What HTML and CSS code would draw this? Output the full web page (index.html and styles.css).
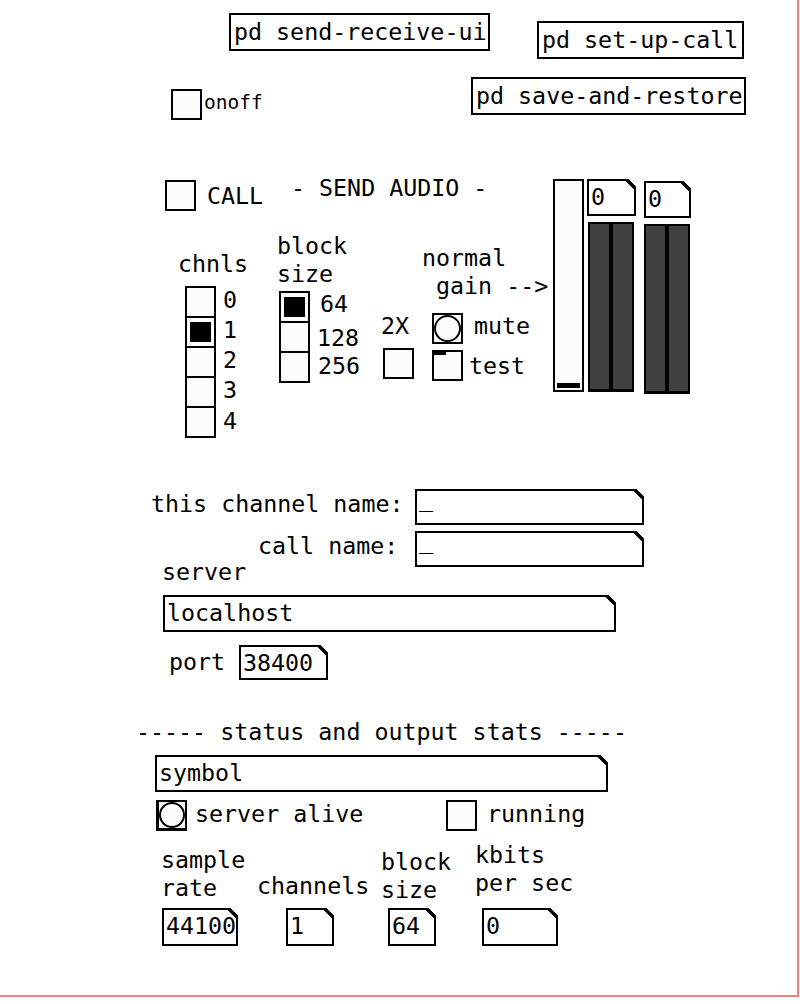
FILE: index.html
```html
<!DOCTYPE html>
<html lang="en">
<head>
    <meta charset="UTF-8">
    <title>send audio</title>
    <link rel="stylesheet" href="styles.css">
</head>
<body>

    <div class="patch">
        <div class="gop"></div>

        <div class="obj o-sendrecv">pd send-receive-ui</div>
        <div class="obj o-setup">pd set-up-call</div>
        <div class="obj o-save">pd save-and-restore</div>

        <div class="tgl t-onoff"></div>
        <div class="lbl-small l-onoff">onoff</div>

        <div class="tgl t-call"></div>
        <div class="cmt c-call">CALL</div>
        <div class="cmt c-title">- SEND AUDIO -</div>

        <!-- channel count radio -->
        <div class="cmt c-chnls">chnls</div>
        <div class="vradio r-chnls">
            <div class="cell"></div>
            <div class="cell on"></div>
            <div class="cell"></div>
            <div class="cell"></div>
            <div class="cell"></div>
        </div>
        <div class="cmt c-n0">0</div>
        <div class="cmt c-n1">1</div>
        <div class="cmt c-n2">2</div>
        <div class="cmt c-n3">3</div>
        <div class="cmt c-n4">4</div>

        <!-- block size radio -->
        <div class="cmt c-block">block
size</div>
        <div class="vradio r-block">
            <div class="cell on"></div>
            <div class="cell"></div>
            <div class="cell"></div>
        </div>
        <div class="cmt c-b64">64</div>
        <div class="cmt c-b128">128</div>
        <div class="cmt c-b256">256</div>

        <div class="cmt c-2x">2X</div>
        <div class="tgl t-2x"></div>

        <div class="cmt c-gain">normal
 gain --&gt;</div>
        <div class="bng b-mute"><span></span></div>
        <div class="cmt c-mute">mute</div>
        <div class="tgl t-test"><span class="mark"></span></div>
        <div class="cmt c-test">test</div>

        <!-- gain slider and meters -->
        <div class="vsl"><span class="knob"></span></div>
        <div class="atom a-lvl1">0</div>
        <div class="atom a-lvl2">0</div>
        <div class="vu vu-1"></div>
        <div class="vu vu-2"></div>
        <div class="vu vu-3"></div>
        <div class="vu vu-4"></div>

        <!-- names and server -->
        <div class="cmt c-chname">this channel name:</div>
        <div class="atom a-chname"><span class="empty">_</span></div>
        <div class="cmt c-callname">call name:</div>
        <div class="atom a-callname"><span class="empty">_</span></div>
        <div class="cmt c-server">server</div>
        <div class="atom a-host">localhost</div>
        <div class="cmt c-port">port</div>
        <div class="atom a-port">38400</div>

        <!-- status -->
        <div class="cmt c-status">----- status and output stats -----</div>
        <div class="atom a-symbol">symbol</div>
        <div class="bng b-alive"><span></span></div>
        <div class="cmt c-alive">server alive</div>
        <div class="tgl t-running"></div>
        <div class="cmt c-running">running</div>

        <div class="cmt c-sr">sample
rate</div>
        <div class="cmt c-ch">channels</div>
        <div class="cmt c-bs">block
size</div>
        <div class="cmt c-kb">kbits
per sec</div>

        <div class="atom a-sr">44100</div>
        <div class="atom a-ch">1</div>
        <div class="atom a-bs">64</div>
        <div class="atom a-kb">0</div>
    </div>

</body>
</html>
```

FILE: styles.css
```css
/* pd patch canvas, everything sits at its patch coordinates */
body {
    margin: 0;
    background: #fff;
    color: #000;
    font-family: "DejaVu Sans Mono", "Liberation Mono", monospace;
    font-size: 23.3px;
}
.patch {
    position: relative;
    width: 800px;
    height: 1004px;
    overflow: hidden;
}
.gop {
    position: absolute;
    left: -4px;
    top: -4px;
    width: 803px;
    height: 1001px;
    box-sizing: border-box;
    border-right: 2px solid #ef7f7f;
    border-bottom: 2px solid #ef7f7f;
}

/* comments */
.cmt {
    position: absolute;
    line-height: 28px;
    white-space: pre;
}
.lbl-small {
    position: absolute;
    font-size: 19.5px;
    line-height: 24px;
}

/* object boxes */
.obj {
    position: absolute;
    box-sizing: border-box;
    height: 38px;
    border: 2px solid #000;
    padding-left: 3px;
    line-height: 33px;
    white-space: pre;
    background: #fff;
}
.o-sendrecv { left: 229px; top: 13px; width: 261px; }
.o-setup { left: 537px; top: 21px; width: 207px; }
.o-save { left: 471px; top: 77px; width: 275px; }

/* number / symbol atoms with the cut corner */
.atom {
    position: absolute;
    box-sizing: border-box;
    border: 2px solid #000;
    background: #fff;
    padding-left: 2px;
    line-height: 31px;
    white-space: pre;
}
.atom::after {
    content: "";
    position: absolute;
    top: -2px;
    right: -2px;
    width: 10px;
    height: 10px;
    background: linear-gradient(to bottom left, #fff 0 calc(50% - 1.5px), #000 calc(50% - 1.5px) calc(50% + 1.5px), transparent calc(50% + 1.5px));
}
.atom .empty {
    line-height: 0;
    vertical-align: 9px;
}
.a-lvl1 { left: 587px; top: 179px; width: 49px; height: 37px; }
.a-lvl2 { left: 644px; top: 181px; width: 47px; height: 37px; }
.a-chname { left: 415px; top: 489px; width: 229px; height: 36px; }
.a-callname { left: 415px; top: 531px; width: 229px; height: 36px; }
.a-host { left: 163px; top: 595px; width: 453px; height: 37px; }
.a-port { left: 239px; top: 645px; width: 89px; height: 35px; }
.a-symbol { left: 155px; top: 755px; width: 453px; height: 37px; }
.a-sr { left: 162px; top: 908px; width: 76px; height: 38px; }
.a-ch { left: 286px; top: 908px; width: 48px; height: 38px; }
.a-bs { left: 388px; top: 908px; width: 48px; height: 38px; }
.a-kb { left: 482px; top: 908px; width: 76px; height: 38px; }

/* toggles and bangs */
.tgl, .bng {
    position: absolute;
    box-sizing: border-box;
    width: 31px;
    height: 31px;
    border: 2px solid #000;
    background: #fcfcfc;
}
.bng span {
    display: block;
    box-sizing: border-box;
    width: 100%;
    height: 100%;
    border: 2px solid #000;
    border-radius: 50%;
}
.t-onoff { left: 171px; top: 89px; }
.t-call { left: 165px; top: 180px; }
.t-2x { left: 383px; top: 348px; }
.t-test { left: 432px; top: 350px; }
.t-running { left: 446px; top: 800px; }
.b-mute { left: 432px; top: 313px; }
.b-alive {
    left: 156px;
    top: 800px;
    border-left-width: 3px;
    border-bottom-width: 3px;
}
.t-test .mark {
    position: absolute;
    left: 0;
    top: 0;
    width: 12px;
    height: 3px;
    background: #000;
}

/* radio groups */
.vradio {
    position: absolute;
    display: flex;
    flex-direction: column;
    width: 31px;
}
.vradio .cell {
    position: relative;
    box-sizing: border-box;
    height: 32px;
    border: 2px solid #000;
    background: #fcfcfc;
}
.vradio .cell + .cell {
    margin-top: -2px;
}
.vradio .cell.on::after {
    content: "";
    position: absolute;
    left: 3px;
    top: 4px;
    width: 21px;
    height: 20px;
    background: #000;
}
.r-chnls { left: 185px; top: 286px; }
.r-block { left: 279px; top: 291px; }

/* gain slider */
.vsl {
    position: absolute;
    left: 553px;
    top: 179px;
    box-sizing: border-box;
    width: 31px;
    height: 213px;
    border: 2px solid #000;
    background: #fcfcfc;
}
.vsl .knob {
    position: absolute;
    left: 2px;
    right: 2px;
    bottom: 2px;
    height: 5px;
    background: #000;
}

/* level meters */
.vu {
    position: absolute;
    box-sizing: border-box;
    width: 23px;
    height: 170px;
    border: 2px solid #000;
    border-bottom-width: 3px;
    background: #404040;
}
.vu-1 { left: 588px; top: 222px; }
.vu-2 { left: 611px; top: 222px; }
.vu-3 { left: 644px; top: 224px; }
.vu-4 { left: 667px; top: 224px; }

/* comment positions */
.l-onoff { left: 204px; top: 91px; }
.c-call { left: 207px; top: 182px; }
.c-title { left: 291px; top: 174px; }
.c-chnls { left: 178px; top: 250px; }
.c-n0 { left: 223px; top: 286px; }
.c-n1 { left: 223px; top: 316px; }
.c-n2 { left: 223px; top: 346px; }
.c-n3 { left: 223px; top: 376px; }
.c-n4 { left: 223px; top: 407px; }
.c-block { left: 277px; top: 232px; }
.c-b64 { left: 320px; top: 290px; }
.c-b128 { left: 317px; top: 324px; }
.c-b256 { left: 318px; top: 352px; }
.c-2x { left: 381px; top: 312px; }
.c-gain { left: 422px; top: 244px; }
.c-mute { left: 474px; top: 312px; }
.c-test { left: 469px; top: 352px; }
.c-chname { left: 151px; top: 490px; }
.c-callname { left: 258px; top: 532px; }
.c-server { left: 162px; top: 558px; }
.c-port { left: 169px; top: 648px; }
.c-status { left: 136px; top: 718px; }
.c-alive { left: 195px; top: 800px; }
.c-running { left: 487px; top: 800px; }
.c-sr { left: 161px; top: 846px; }
.c-ch { left: 257px; top: 872px; }
.c-bs { left: 381px; top: 848px; }
.c-kb { left: 475px; top: 841px; }
```
